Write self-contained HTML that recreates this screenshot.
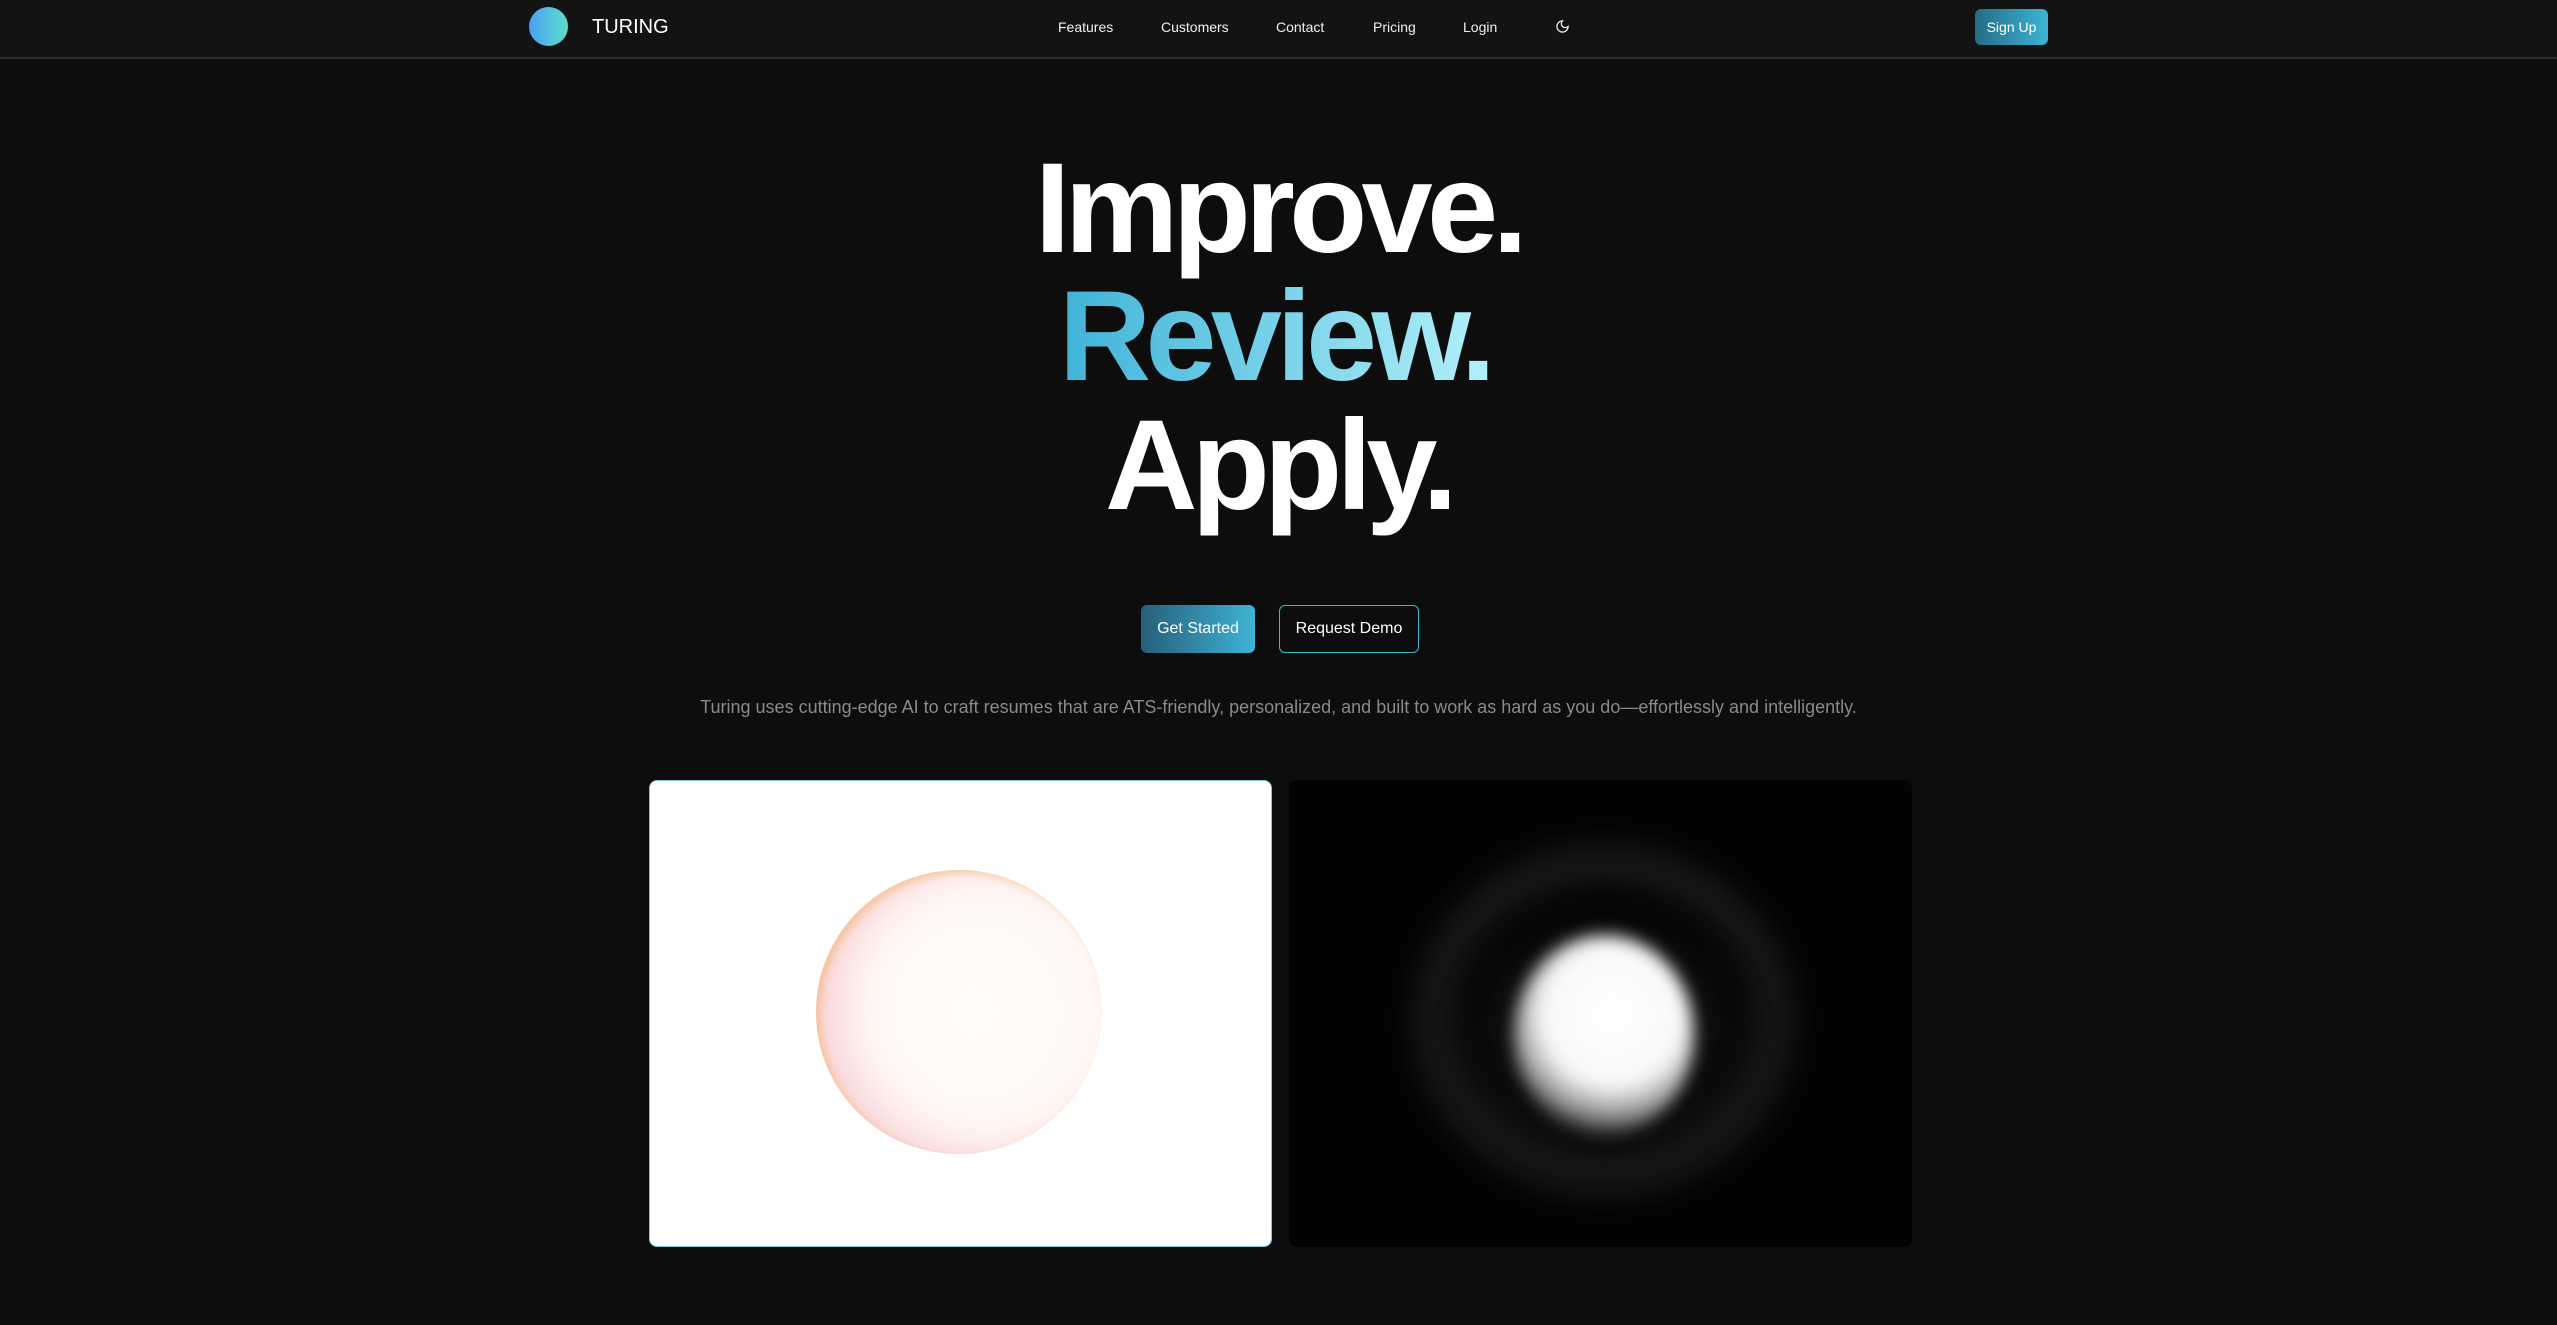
<!DOCTYPE html>
<html><head><meta charset="utf-8"><style>
*{margin:0;padding:0;box-sizing:border-box}
body{width:2557px;height:1325px;background:#0d0d0d;font-family:"Liberation Sans",Arial,sans-serif;color:#fff;overflow:hidden;position:relative}
.nav{position:absolute;left:0;top:0;width:2557px;height:59px;background:#131313;border-bottom:2px solid #2e2e2e}
.logo{position:absolute;left:529px;top:7px;width:39px;height:39px;border-radius:50%;background:linear-gradient(90deg,#4a9ef5,#5ce0c8)}
.brand{position:absolute;left:592px;top:16px;font-size:20px;color:#fff}
.nl{position:absolute;top:19px;font-size:14px;color:#f0f0f0}
.signup{position:absolute;left:1975px;top:9px;width:73px;height:36px;border-radius:6px;background:linear-gradient(90deg,#256d87,#3db4d6);font-size:14px;line-height:36px;text-align:center}
h1{position:absolute;left:0;width:2557px;text-align:center;font-size:128px;font-weight:bold;letter-spacing:-0.045em;line-height:1}
.rev{background:linear-gradient(90deg,#3fb3d7,#b4f1fb);-webkit-background-clip:text;background-clip:text;color:transparent;display:inline-block;padding-right:8px}
.btn{position:absolute;top:605px;height:48px;border-radius:6px;font-size:16px;line-height:46px;text-align:center}
.p{position:absolute;top:697px;left:0;width:2557px;text-align:center;font-size:18px;color:#8a8a8a}
.card{position:absolute;top:780px;height:467px;border-radius:8px}
</style></head><body>
<div class="nav">
<div class="logo"></div><div class="brand">TURING</div>
<div class="nl" style="left:1058px">Features</div>
<div class="nl" style="left:1161px">Customers</div>
<div class="nl" style="left:1276px">Contact</div>
<div class="nl" style="left:1373px">Pricing</div>
<div class="nl" style="left:1463px">Login</div>
<svg style="position:absolute;left:1555px;top:18px" width="15" height="17" viewBox="0 0 24 24" fill="none" stroke="#eee" stroke-width="2" stroke-linecap="round"><path d="M12 3a6 6 0 0 0 9 9 9 9 0 1 1-9-9z"/></svg>
<div class="signup">Sign Up</div>
</div>
<h1 style="top:145px">Improve.</h1>
<h1 style="top:273px"><span class="rev">Review.</span></h1>
<h1 style="top:402px">Apply.</h1>
<div class="btn" style="left:1141px;width:114px;background:linear-gradient(90deg,#265f79,#3db4d6);line-height:48px">Get Started</div>
<div class="btn" style="left:1279px;width:140px;border:1.5px solid #3db4d6">Request Demo</div>
<div class="p">Turing uses cutting-edge AI to craft resumes that are ATS-friendly, personalized, and built to work as hard as you do—effortlessly and intelligently.</div>
<div class="card" style="left:649px;width:623px;background:#fff;border:1.5px solid #7fc6d8;overflow:hidden">
<div style="position:absolute;left:166px;top:89px;width:286px;height:284px;border-radius:50%;background:radial-gradient(circle at 55% 50%,#fffdfa 0%,#fff8f4 60%,#fdeef0 88%,#f6d0b0 100%);box-shadow:inset 5px 3px 8px rgba(240,170,80,.45),inset 30px -4px 40px rgba(240,150,170,.3)"></div>
</div>
<div class="card" style="left:1289px;width:623px;background:#030303;overflow:hidden">
<div style="position:absolute;left:130px;top:70px;width:370px;height:340px;border-radius:50%;border:28px solid rgba(90,90,90,.35);filter:blur(18px)"></div>
<div style="position:absolute;left:150px;top:110px;width:330px;height:290px;border-radius:50%;background:radial-gradient(ellipse,rgba(60,60,60,.5) 0%,rgba(0,0,0,0) 70%);filter:blur(10px)"></div>
<div style="position:absolute;left:225px;top:155px;width:180px;height:200px;border-radius:50%;background:radial-gradient(circle at 55% 40%,#fff 0%,#f8f8f8 45%,rgba(200,200,200,.7) 65%,rgba(0,0,0,0) 80%);filter:blur(8px)"></div>
</div>
</body></html>
